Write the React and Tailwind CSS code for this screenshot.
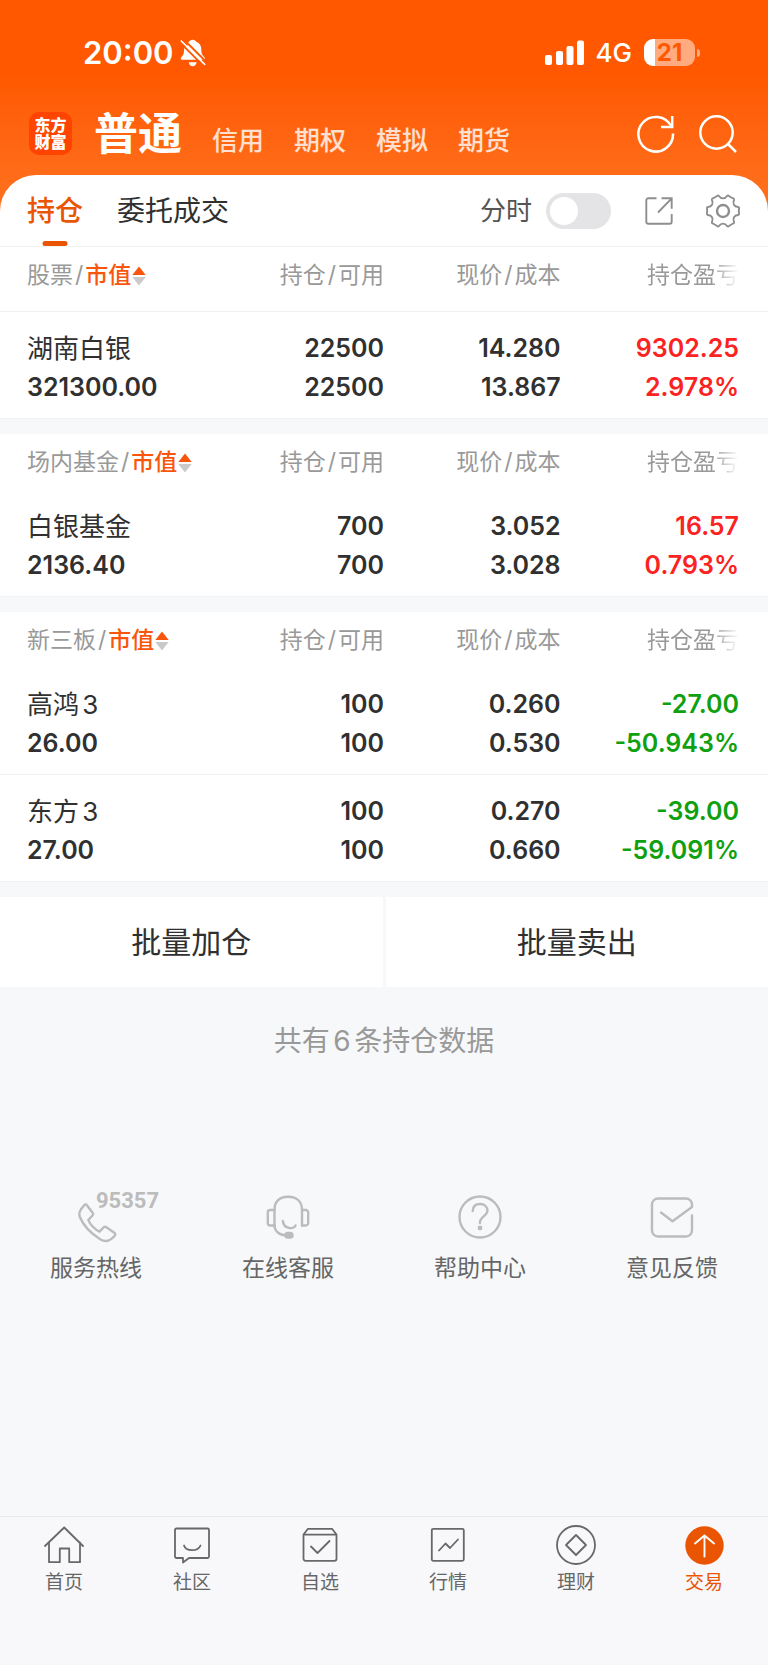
import { useState } from 'react'

const sections = [
  {
    name: '股票',
    divided: true,
    rows: [
      { name: '湖南白银', value: '321300.00', hold: '22500', usable: '22500', price: '14.280', cost: '13.867', profit: '9302.25', rate: '2.978%', up: true },
    ],
  },
  {
    name: '场内基金',
    rows: [
      { name: '白银基金', value: '2136.40', hold: '700', usable: '700', price: '3.052', cost: '3.028', profit: '16.57', rate: '0.793%', up: true },
    ],
  },
  {
    name: '新三板',
    rows: [
      { name: '高鸿3', value: '26.00', hold: '100', usable: '100', price: '0.260', cost: '0.530', profit: '-27.00', rate: '-50.943%', up: false },
      { name: '东方3', value: '27.00', hold: '100', usable: '100', price: '0.270', cost: '0.660', profit: '-39.00', rate: '-59.091%', up: false },
    ],
  },
]

function BellOff() {
  return (
    <svg width="26" height="28" viewBox="0 0 78 84" aria-hidden="true">
      <path d="M38 2c6 0 9 3 11 6 10 4 15 12 15 24 0 12 3 16 8 21 4 4 4 9-1 9H6c-5 0-5-5-1-9 5-5 7-9 7-21C12 20 17 12 27 8c2-3 5-6 11-6zM26 70h24c-2 8-6 12-12 12s-10-4-12-12z" fill="#fff" />
      <path d="M-2 8 72 82M8-2l74 74" stroke="#ff5800" strokeWidth="6" />
      <path d="M0 6V40L22 20 26 4Z" fill="#ff5800" />
      <path d="M4 6l70 70" stroke="#fff" strokeWidth="5" strokeLinecap="round" />
    </svg>
  )
}

function Signal() {
  return (
    <svg width="39" height="25" viewBox="0 0 39 25" fill="#fff" aria-hidden="true">
      <rect x="0" y="15" width="7" height="10" rx="2" />
      <rect x="11" y="11" width="7" height="14" rx="2" />
      <rect x="21.5" y="6" width="7" height="19" rx="2" />
      <rect x="32" y="0.5" width="7" height="24.5" rx="2" />
    </svg>
  )
}

function Battery() {
  return (
    <div className="flex items-center gap-0.5">
      <div className="flex h-[27px] w-[51px] items-center justify-center rounded-[9px] bg-linear-to-r from-white from-22% to-[#ffab80] to-22% text-2xl leading-none font-bold text-[#ff5800]">
        21
      </div>
      <div className="h-2 w-[3px] rounded-r-full bg-[#ffab80]" />
    </div>
  )
}

function RefreshIcon() {
  return (
    <svg width="38" height="38" viewBox="0 0 38 38" fill="none" stroke="#fff" strokeWidth="2.5" aria-hidden="true">
      <path d="M36 18.500A17.300 17.300 0 1 1 34.200 11.500" />
      <path d="M24 12h11.200V1" />
    </svg>
  )
}

function SearchIcon() {
  return (
    <svg width="38" height="38" viewBox="0 0 38 38" fill="none" stroke="#fff" strokeWidth="2.5" aria-hidden="true">
      <circle cx="17.5" cy="17.5" r="16.2" />
      <path d="M28.500 28.500l8.500 8.500" />
    </svg>
  )
}

function ShareIcon() {
  return (
    <svg width="28" height="28" viewBox="0 0 28 28" fill="none" stroke="#8e8e8e" strokeWidth="1.9" aria-hidden="true">
      <path d="M11.500 1.300H3.300a2 2 0 0 0-2 2v21.400a2 2 0 0 0 2 2h21.400a2 2 0 0 0 2-2V17" />
      <path d="M16.500 1.300h10.200v10.400M26.700 1.300 13 15.500" />
    </svg>
  )
}

function polar(r, deg) {
  const a = (deg * Math.PI) / 180
  return `${(18 + r * Math.cos(a)).toFixed(2)} ${(18 + r * Math.sin(a)).toFixed(2)}`
}

// six teeth, one every 60 degrees
const gearPath = [0, 60, 120, 180, 240, 300]
  .map((t, i) => `${i ? 'L' : 'M'}${polar(15.6, t - 15)}Q${polar(17, t - 12)} ${polar(16, t - 7)}L${polar(16, t + 7)}Q${polar(17, t + 12)} ${polar(15.6, t + 15)}C${polar(12, t + 21)} ${polar(12, t + 39)} ${polar(15.6, t + 45)}`)
  .join('') + 'Z'

function GearIcon() {
  return (
    <svg width="36" height="36" viewBox="0 0 36 36" fill="none" stroke="#8e8e8e" strokeWidth="1.9" strokeLinejoin="round" aria-hidden="true">
      <path d={gearPath} />
      <circle cx="18" cy="18" r="6" strokeWidth="2.4" />
    </svg>
  )
}

function SortArrows() {
  return (
    <svg width="14" height="20" viewBox="0 0 14 20" className="ml-px" aria-hidden="true">
      <path d="M7 0.500 13.700 9H0.300Z" fill="#f8560c" />
      <path d="M7 19.500 13.700 11H0.300Z" fill="#cacaca" />
    </svg>
  )
}

function ServiceIcon({ children }) {
  return (
    <svg width="44" height="44" viewBox="0 0 44 44" fill="none" stroke="#bcbcbc" strokeWidth="2.4" strokeLinecap="round" strokeLinejoin="round" className="overflow-visible" aria-hidden="true">
      {children}
    </svg>
  )
}

const services = [
  {
    label: '服务热线',
    badge: '95357',
    icon: <path d="M10.200 10.300c1-1.100 1.900-1.100 2.700 0l5.900 7.600c.7 1 .6 1.600-.1 2.400l-4.400 4.700c1.200 3.800 7.500 10.300 11.200 11.700l4-4.200c.9-.9 1.500-1 2.500-.4l8.300 5.700c1.200.9 1.300 1.900.4 2.900-4.300 5-9.300 6.800-14.200 3.700C18.500 39.500 9.500 31 5.700 21.800c-1.700-4.300 1.200-8.200 4.500-11.500z" />,
  },
  {
    label: '在线客服',
    icon: (
      <>
        <path d="M8.500 30.500V15c0-8 4.500-13.200 13.500-13.200S36 7 36 15v15.500" />
        <path d="M8.500 15H4.300a2.500 2.500 0 0 0-2.500 2.500V28a2.500 2.500 0 0 0 2.500 2.500h4.200M36 15h3.700a2.500 2.500 0 0 1 2.500 2.500V28a2.500 2.500 0 0 1-2.500 2.500H36" />
        <path d="M16.800 26c1 8.500 11.500 8.500 12.700 4.500M8.500 30.500c0 5 4 9.300 11 9.800" />
        <rect x="19.5" y="38" width="7" height="4.6" rx="2.3" fill="#bcbcbc" />
      </>
    ),
  },
  {
    label: '帮助中心',
    icon: (
      <>
        <circle cx="22" cy="22" r="20.5" />
        <path d="M14.700 16c.2-4.500 3.200-7 7.400-7s7.300 2.600 7.300 6.700c0 5.300-7.700 5.800-7.500 12.300" />
        <circle cx="22" cy="33" r="1.2" fill="#bcbcbc" />
      </>
    ),
  },
  {
    label: '意见反馈',
    icon: <path d="M11 17.500l11.500 8.700L42 12V9.500a6 6 0 0 0-6-6H8a6 6 0 0 0-6 6v26a6 6 0 0 0 6 6h28a6 6 0 0 0 6-6V20.500" />,
  },
]

function NavIcon({ children }) {
  return (
    <svg width="40" height="40" viewBox="0 0 40 40" fill="none" stroke="#686868" strokeWidth="1.8" strokeLinecap="round" strokeLinejoin="round" aria-hidden="true">
      {children}
    </svg>
  )
}

const navItems = [
  {
    label: '首页',
    icon: <path d="M1 21 20.200 2.500 39 21M5 17.500v19.700h10.800V23.500h9.400v13.700H36V17.500" />,
  },
  {
    label: '社区',
    icon: (
      <>
        <path d="M4.500 3.500h31a1.500 1.500 0 0 1 1.500 1.500v26.500a1.500 1.500 0 0 1-1.500 1.500H17l-6 4.500V33H4.500A1.500 1.500 0 0 1 3 31.500V5a1.500 1.500 0 0 1 1.500-1.500z" />
        <path d="M12 20.500c2 6.300 14 6.300 16.500 0" />
      </>
    ),
  },
  {
    label: '自选',
    icon: (
      <>
        <path d="M3.500 9.500 8 3.800h24l4.500 5.700v24.300a2 2 0 0 1-2 2h-29a2 2 0 0 1-2-2zM3.500 9.700h33" />
        <path d="M11 21.500l6.500 6.500L29.500 16" />
      </>
    ),
  },
  {
    label: '行情',
    icon: (
      <>
        <rect x="3.8" y="3.8" width="32" height="32" rx="1.5" />
        <path d="M11 25.500l6.500-7 4.500 4.500 8-8.500" />
      </>
    ),
  },
  {
    label: '理财',
    icon: (
      <>
        <circle cx="20" cy="20" r="19" />
        <path d="M20 10 30 20 20 30 10 20Z" />
      </>
    ),
  },
  {
    label: '交易',
    active: true,
    icon: (
      <>
        <circle cx="20.5" cy="20.5" r="19.2" fill="#ea5504" stroke="none" />
        <path d="M20.500 31.500v-21M11 18.500l9.500-8 9.500 8" stroke="#fff" strokeWidth="1.9" />
      </>
    ),
  },
]

function Slash() {
  return <span className="px-0.5">/</span>
}

function HoldingsTable({ section }) {
  const pad = section.divided ? 'pt-4 pb-[23px] border-b border-[#f1f2f4]' : 'pt-4 pb-[15px]'
  const th = `${pad} text-[23px] leading-[25px] font-normal text-[#999]`
  const td = 'border-b border-[#f1f2f4] pt-[17px] pb-[11px]'

  return (
    <table className="w-full table-fixed border-separate border-spacing-0 bg-white">
      <colgroup>
        <col className="w-[28%]" />
        <col className="w-[22%]" />
        <col className="w-[23%]" />
        <col className="w-[27%]" />
      </colgroup>
      <thead>
        <tr>
          <th scope="col" className={`${th} pl-[27px] text-left`}>
            <div className="flex items-center whitespace-nowrap">
              {section.name}
              <Slash />
              <button type="button" className="flex items-center font-medium text-[#f8560c]">
                市值
                <SortArrows />
              </button>
            </div>
          </th>
          <th scope="col" className={`${th} text-right`}>持仓<Slash />可用</th>
          <th scope="col" className={`${th} text-right`}>现价<Slash />成本</th>
          <th scope="col" className={`${th} pr-[29px] text-right`}>
            <span className="mask-r-from-70% mask-r-to-100%">持仓盈亏</span>
          </th>
        </tr>
      </thead>
      <tbody>
        {section.rows.map((row) => (
          <tr key={row.name} className="text-[25px] leading-[39px] font-semibold">
            <td className={`${td} pl-[27px]`}>
              <div className="text-[26px] font-normal [text-autospace:normal]">{row.name}</div>
              <div>{row.value}</div>
            </td>
            <td className={`${td} text-right`}>
              <div>{row.hold}</div>
              <div>{row.usable}</div>
            </td>
            <td className={`${td} text-right`}>
              <div>{row.price}</div>
              <div>{row.cost}</div>
            </td>
            <td className={`${td} pr-[29px] text-right ${row.up ? 'text-[#fb2222]' : 'text-[#0fa00f]'}`}>
              <div>{row.profit}</div>
              <div>{row.rate}</div>
            </td>
          </tr>
        ))}
      </tbody>
    </table>
  )
}

export default function App() {
  const [timeShare, setTimeShare] = useState(false)

  return (
    <div className="flex min-h-screen flex-col bg-[#f7f8fa] font-['Inter','Noto_Sans_CJK_SC',sans-serif] text-[#303030]">
      <div className="bg-linear-to-b from-[#ff5800] from-30% to-[#ff701c] to-80%">
        <div className="flex h-[72px] items-center justify-between pt-[33px] pr-[68px] pl-[83px] text-white">
          <div className="flex items-center gap-1.5">
            <span className="text-[31px] leading-10 font-semibold">20:00</span>
            <BellOff />
          </div>
          <div className="flex items-center gap-3">
            <Signal />
            <span className="text-[26px] leading-10 font-medium">4G</span>
            <Battery />
          </div>
        </div>

        <header className="flex h-[103px] items-center justify-between pt-5 pr-[31px] pl-[29px] text-white">
          <div className="flex items-center gap-[22px]">
            <div className="flex h-[43px] w-[43px] flex-col items-center justify-center rounded-[10px] bg-[#ff4400] text-base leading-[17px] font-black">
              <span>东方</span>
              <span>财富</span>
            </div>
            <nav className="flex items-baseline gap-[30px] pt-2 text-[26px] leading-[52px] font-medium text-white/80">
              <button type="button" className="text-[44px] font-bold text-white">普通</button>
              <button type="button">信用</button>
              <button type="button">期权</button>
              <button type="button">模拟</button>
              <button type="button">期货</button>
            </nav>
          </div>
          <div className="flex items-center gap-6">
            <button type="button" aria-label="刷新"><RefreshIcon /></button>
            <button type="button" aria-label="搜索"><SearchIcon /></button>
          </div>
        </header>

        <div className="flex h-[72px] items-center justify-between rounded-t-[36px] border-b border-[#f1f2f4] bg-white px-[27px]">
          <div className="flex h-full gap-[34px] text-[28px]">
            <button type="button" className="relative font-medium text-[#ea5504]">
              持仓
              <span className="absolute bottom-0 left-1/2 h-[5px] w-[25px] -translate-x-1/2 rounded-sm bg-[#ea5504]" />
            </button>
            <button type="button">委托成交</button>
          </div>
          <div className="flex items-center">
            <label htmlFor="time-share" className="mr-3.5 text-[26px] text-[#555]">分时</label>
            <input
              id="time-share"
              type="checkbox"
              role="switch"
              checked={timeShare}
              onChange={(e) => setTimeShare(e.target.checked)}
              className="flex h-9 w-[65px] appearance-none items-center rounded-full bg-[#e4e4e6] p-1 before:h-7 before:w-7 before:rounded-full before:bg-white checked:justify-end checked:bg-[#ea5504]"
            />
            <button type="button" aria-label="分享" className="ml-[34px]"><ShareIcon /></button>
            <button type="button" aria-label="设置" className="ml-8"><GearIcon /></button>
          </div>
        </div>
      </div>

      <main>
        <div className="flex flex-col gap-[15px] bg-[#f6f8fa] pb-[15px]">
          {sections.map((section) => (
            <HoldingsTable key={section.name} section={section} />
          ))}
        </div>

        <div className="grid grid-cols-2 gap-[3px] text-[30px] leading-[90px]">
          <button type="button" className="bg-white">批量加仓</button>
          <button type="button" className="bg-white">批量卖出</button>
        </div>

        <p className="mt-9 text-center text-[28px] leading-9 text-[#999] [text-autospace:normal]">共有6条持仓数据</p>

        <div className="mt-[136px] grid grid-cols-4">
          {services.map((item) => (
            <a key={item.label} href="#" className="flex flex-col items-center gap-[15px] text-[23px] leading-7 text-[#666]">
              <span className="relative">
                <ServiceIcon>{item.icon}</ServiceIcon>
                {item.badge && (
                  <span className="absolute -top-1.5 left-[22px] font-['Roboto'] text-[22px] leading-6 font-bold text-[#bcbcbc]">
                    {item.badge}
                  </span>
                )}
              </span>
              {item.label}
            </a>
          ))}
        </div>
      </main>

      <nav className="mt-auto grid grid-cols-6 border-t border-[#e8e9eb] bg-[#f8f8fb] pt-2 pb-[70px]">
        {navItems.map((item) => (
          <a
            key={item.label}
            href="#"
            className={`flex flex-col items-center gap-1.5 text-[19px] leading-6 ${item.active ? 'text-[#ea5504]' : 'text-[#666]'}`}
          >
            <NavIcon>{item.icon}</NavIcon>
            {item.label}
          </a>
        ))}
      </nav>
    </div>
  )
}
